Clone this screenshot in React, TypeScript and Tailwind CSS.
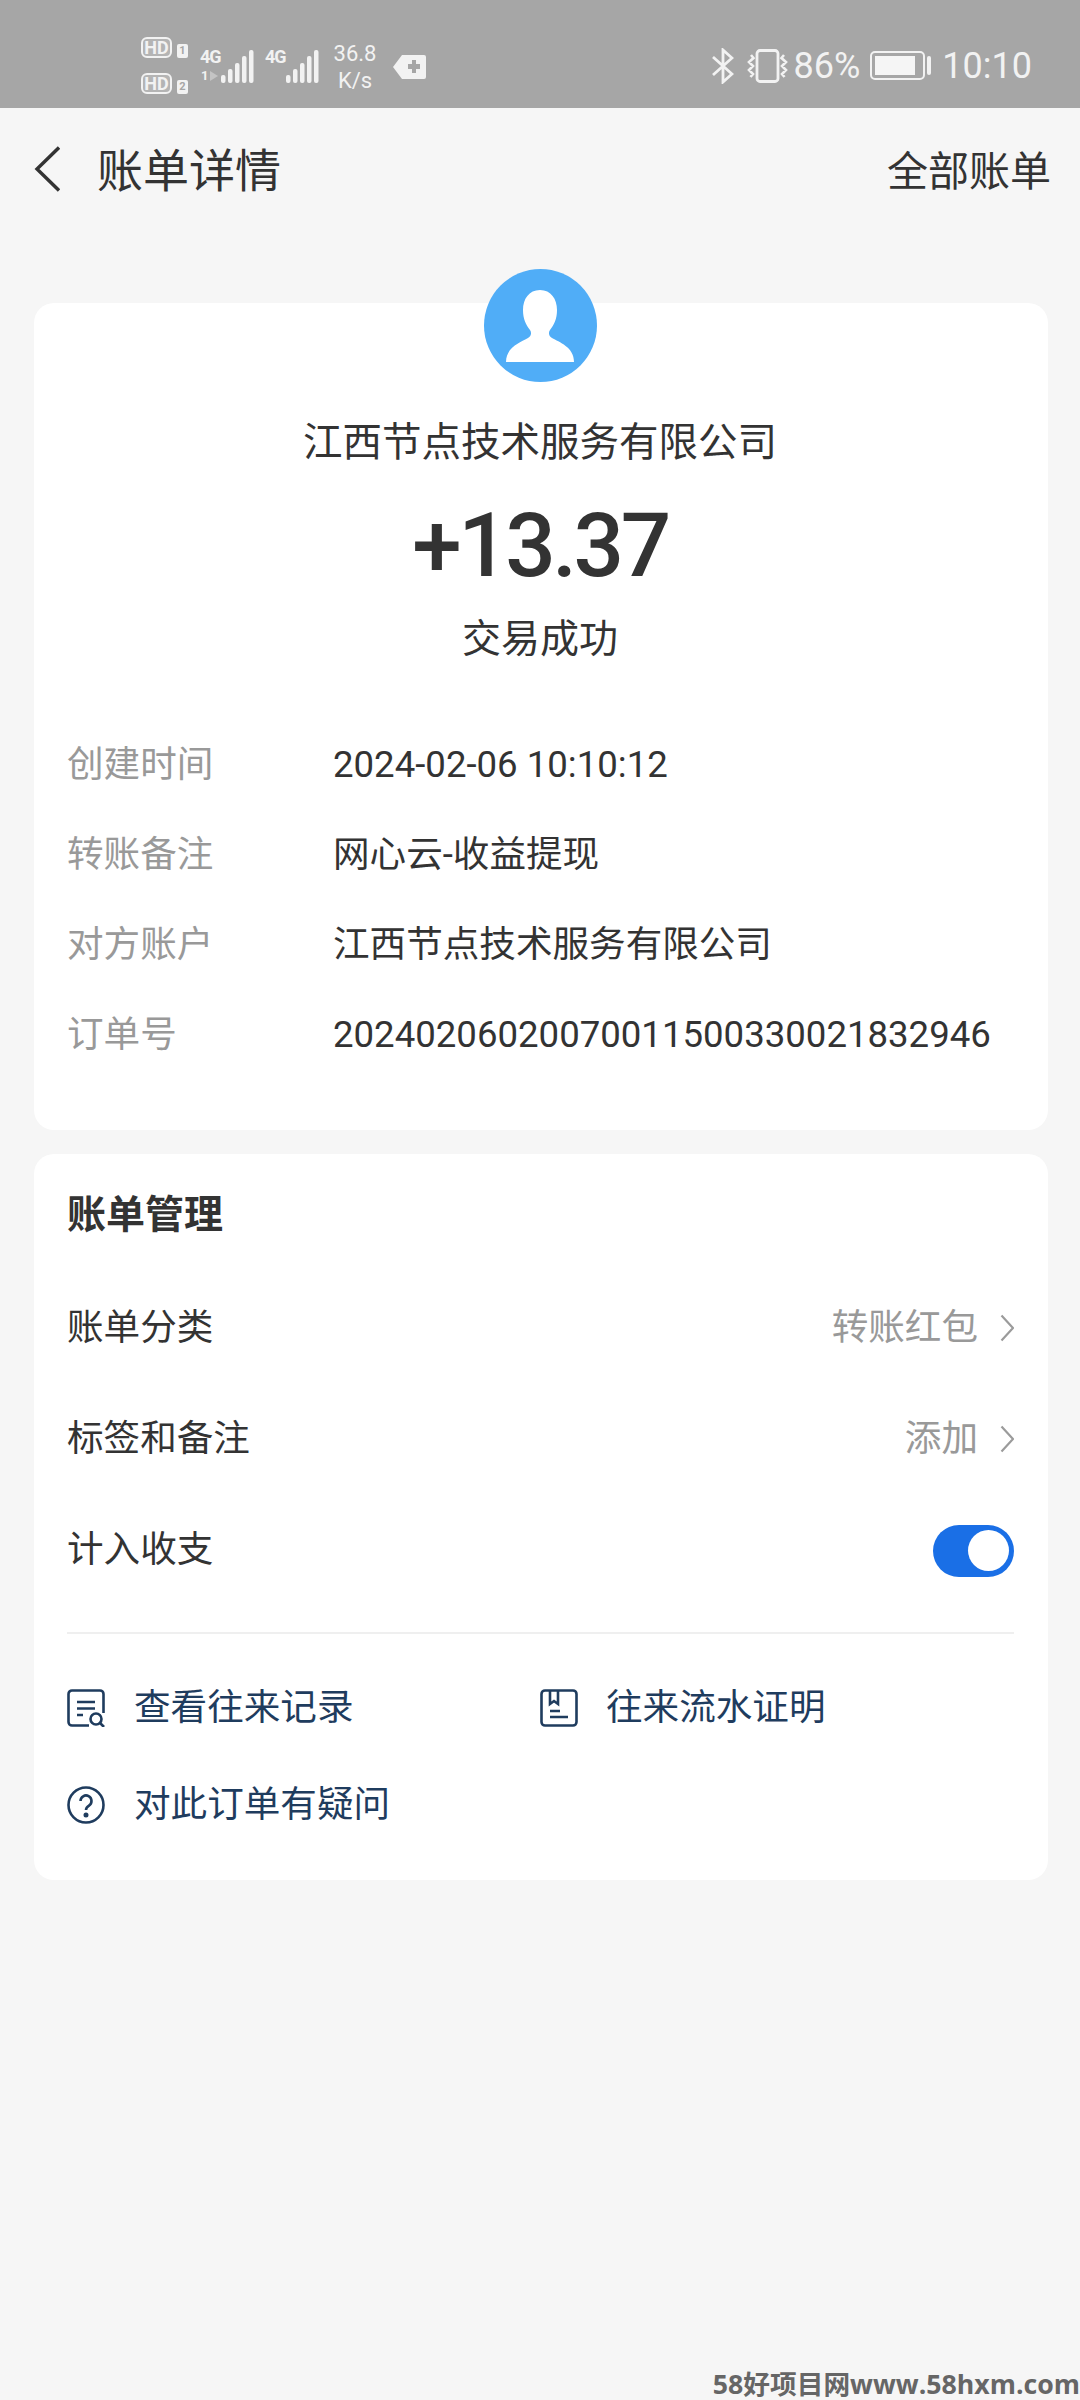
const rows = [
  { label: "创建时间", value: "2024-02-06 10:10:12" },
  { label: "转账备注", value: "网心云-收益提现" },
  { label: "对方账户", value: "江西节点技术服务有限公司" },
  { label: "订单号", value: "20240206020070011500330021832946" },
];

function Chevron() {
  return (
    <svg width="14" height="28" viewBox="0 0 14 28" fill="none" stroke="#9b9b9b" strokeWidth="2.2">
      <path d="M1.5 1.5 13 14 1.5 26.5" />
    </svg>
  );
}

function Bars() {
  const heights = [8, 14, 20, 27, 33];
  return (
    <svg width="34" height="34" viewBox="0 0 34 34" fill="#f2f2f2">
      {heights.map((h, i) => (
        <rect key={i} x={i * 7 + 1} y={34 - h} width="4.5" height={h} rx="2" />
      ))}
    </svg>
  );
}

function StatusBar() {
  return (
    <div className="h-[108px] bg-[#a6a6a6] flex items-center pt-[23px] pl-[141px] pr-[48px] text-[#f2f2f2] font-['Roboto',sans-serif]">
      <div className="flex flex-col gap-[15px]">
        {["1", "2"].map((n) => (
          <div key={n} className="flex items-end gap-[5px]">
            <span className="w-[31px] h-[21px] rounded-[6px] border-2 border-[#f2f2f2] bg-[#b4b4b4] text-[#f2f2f2] text-[18px] leading-[17px] font-bold text-center">
              HD
            </span>
            <span className="w-[11px] h-[14px] rounded-[2px] bg-[#f2f2f2] text-[#a6a6a6] text-[11px] leading-[14px] font-bold text-center">
              {n}
            </span>
          </div>
        ))}
      </div>

      <div className="relative ml-[12px] w-[54px] h-[34px]">
        <span className="absolute left-0 top-0 text-[18px] leading-[16px] font-bold tracking-[-1px]">4G</span>
        <span className="absolute left-[1px] top-[21px] text-[13px] leading-[12px] font-bold">1</span>
        <svg className="absolute left-[10px] top-[22px]" width="8" height="10" viewBox="0 0 8 10" fill="#c4c4c4">
          <path d="M0 0l8 5-8 5z" />
        </svg>
        <div className="absolute right-0 top-0">
          <Bars />
        </div>
      </div>
      <div className="relative ml-[11px] w-[54px] h-[34px]">
        <span className="absolute left-0 top-0 text-[18px] leading-[16px] font-bold tracking-[-1px]">4G</span>
        <div className="absolute right-0 top-0">
          <Bars />
        </div>
      </div>

      <div className="ml-[13px] w-[46px] flex flex-col items-center text-[22px] leading-[27px] mt-[3px]">
        <span>36.8</span>
        <span>K/s</span>
      </div>

      <svg className="ml-[15px] mt-[2px]" width="33" height="26" viewBox="0 0 33 26">
        <path fill="#f2f2f2" d="M9 1h22a2 2 0 0 1 2 2v20a2 2 0 0 1-2 2H9L0 13z" />
        <path fill="#a6a6a6" d="M15 10h4V6h4v4h4v5h-4v4h-4v-4h-4z" />
      </svg>

      <div className="ml-auto flex items-center">
        <svg width="22" height="36" viewBox="0 0 22 36" fill="none" stroke="#f2f2f2" strokeWidth="2.8">
          <path d="M1 9 20 26 11 34V2l9 8L1 27" />
        </svg>
        <svg className="ml-[12px]" width="43" height="34" viewBox="0 0 43 34" fill="none" stroke="#f2f2f2">
          <rect x="11" y="1.5" width="21" height="31" rx="3" strokeWidth="2.8" />
          <path strokeWidth="2.6" d="M5 6l2.5 3L3 13l4 4-4 4 4 4-2.5 3M38 6l-2.5 3 4.500 4-4 4 4 4-4 4 2.500 3" />
        </svg>
        <span className="ml-[5px] text-[36px] leading-none">86%</span>
        <div className="ml-[10px] flex items-center">
          <div className="w-[55px] h-[29px] rounded-[5px] border-2 border-[#f2f2f2] p-[3px]">
            <div className="w-[40px] h-full bg-[#f5f5f5]" />
          </div>
          <div className="ml-[2px] w-[4px] h-[19px] rounded-[2px] bg-[#f2f2f2]" />
        </div>
        <span className="ml-[11px] text-[36px] leading-none">10:10</span>
      </div>
    </div>
  );
}

export default function App() {
  return (
    <div className="relative h-[2400px] w-[1080px] overflow-hidden bg-[#f6f6f6] flex flex-col text-[#333333] font-['Roboto','Noto_Sans_CJK_SC',sans-serif]">
      <StatusBar />

      {/* header */}
      <div className="h-[195px] flex items-start justify-between pl-[34px] pr-[29px]">
        <div className="flex items-center mt-[31px]">
          <svg width="26" height="46" viewBox="0 0 26 46" fill="none" stroke="#333333" strokeWidth="3.4">
            <path d="M25 1.500 3 23l22 21.500" />
          </svg>
          <span className="ml-[37px] text-[46px] leading-[60px] relative top-[2px]">账单详情</span>
        </div>
        <span className="mt-[34px] text-[41px] leading-[60px]">全部账单</span>
      </div>

      {/* transaction card */}
      <div className="ml-[34px] mr-[32px] bg-white rounded-[20px] pb-[50px] pr-[2px] flex flex-col items-center">
        <div className="-mt-[34px] w-[113px] h-[113px] rounded-full bg-[#50adf7] flex items-center justify-center">
          <svg width="68" height="72" viewBox="0 0 68 72" fill="white">
            <path d="M34 0c11 0 17 9 17 20 0 9-3 15-7 20-2 3-1 6 2 8 7 4 22 9 22 24H0c0-15 15-20 22-24 3-2 4-5 2-8-4-5-7-11-7-20C17 9 23 0 34 0z" />
          </svg>
        </div>
        <div className="mt-[31px] text-[39.500px] leading-[60px]">江西节点技术服务有限公司</div>
        <div className="mt-[18px] text-[89px] leading-[110px] font-medium tracking-[-3.500px]">+13.37</div>
        <div className="mt-[8px] text-[39px] leading-[60px]">交易成功</div>

        <div className="mt-[51px] w-full px-[33px]">
          {rows.map((row) => (
            <div key={row.label} className="h-[90px] flex items-center text-[36.600px]">
              <span className="w-[266px] text-[#999999]">{row.label}</span>
              <span>{row.value}</span>
            </div>
          ))}
        </div>
      </div>

      {/* bill management card */}
      <div className="mt-[24px] ml-[34px] mr-[32px] bg-white rounded-[20px] pt-[31px] pb-[45px] pl-[33px] pr-[34px] text-[36.600px]">
        <div className="h-[60px] leading-[60px] font-bold text-[39px]">账单管理</div>
        <div className="mt-[28px]">
          <div className="h-[111px] flex items-center justify-between">
            <span>账单分类</span>
            <span className="flex items-center gap-[22px] text-[#999999]">
              转账红包
              <Chevron />
            </span>
          </div>
          <div className="h-[111px] flex items-center justify-between">
            <span>标签和备注</span>
            <span className="flex items-center gap-[22px] text-[#999999]">
              添加
              <Chevron />
            </span>
          </div>
          <div className="h-[111px] flex items-center justify-between">
            <span>计入收支</span>
            <div className="w-[81px] h-[52px] rounded-full bg-[#1a6fe6] flex items-center justify-end pr-[5px]">
              <div className="w-[41px] h-[41px] rounded-full bg-white" />
            </div>
          </div>
        </div>
        <div className="mt-[26px] h-[2px] bg-[#efefef]" />

        <div className="mt-[44px] text-[#1f3c5e]">
          <div className="flex h-[60px]">
            <div className="w-[473px] flex items-center">
              <svg width="38" height="38" viewBox="0 0 38 38" fill="none" stroke="#1f3c5e" strokeWidth="2.6">
                <path d="M36.500 24V5a3.500 3.500 0 0 0-3.500-3.500H5A3.500 3.500 0 0 0 1.500 5v28A3.500 3.500 0 0 0 5 36.500h17" />
                <path d="M10 13h18M10 19.500h18M10 26h6" />
                <circle cx="29" cy="30" r="5.500" />
                <path d="M33 34l4 4" />
              </svg>
              <span className="ml-[29px]">查看往来记录</span>
            </div>
            <div className="flex items-center">
              <svg width="38" height="38" viewBox="0 0 38 38" fill="none" stroke="#1f3c5e" strokeWidth="2.6">
                <rect x="1.500" y="1.500" width="35" height="35" rx="3.500" />
                <path d="M10 2v13l4-3 4 3V2M10 22h10M10 28h18" />
              </svg>
              <span className="ml-[28px]">往来流水证明</span>
            </div>
          </div>
          <div className="mt-[37px] flex items-center h-[60px]">
            <svg width="38" height="38" viewBox="0 0 38 38" fill="none" stroke="#1f3c5e" strokeWidth="2.6">
              <circle cx="19" cy="19" r="17.500" />
              <path d="M13.500 15a5.500 5.500 0 1 1 8.500 4.600c-2 1.300-3 2.400-3 4.400" />
              <circle cx="19" cy="29" r="1.200" fill="#1f3c5e" />
            </svg>
            <span className="ml-[29px]">对此订单有疑问</span>
          </div>
        </div>
      </div>

      {/* watermark */}
      <div className="mt-auto mb-[1px] text-right text-[26.700px] leading-[30px] font-bold text-[#666666] whitespace-nowrap font-['Open_Sans','Noto_Sans_CJK_SC',sans-serif]">
        58好项目网www.58hxm.com
      </div>
    </div>
  );
}
